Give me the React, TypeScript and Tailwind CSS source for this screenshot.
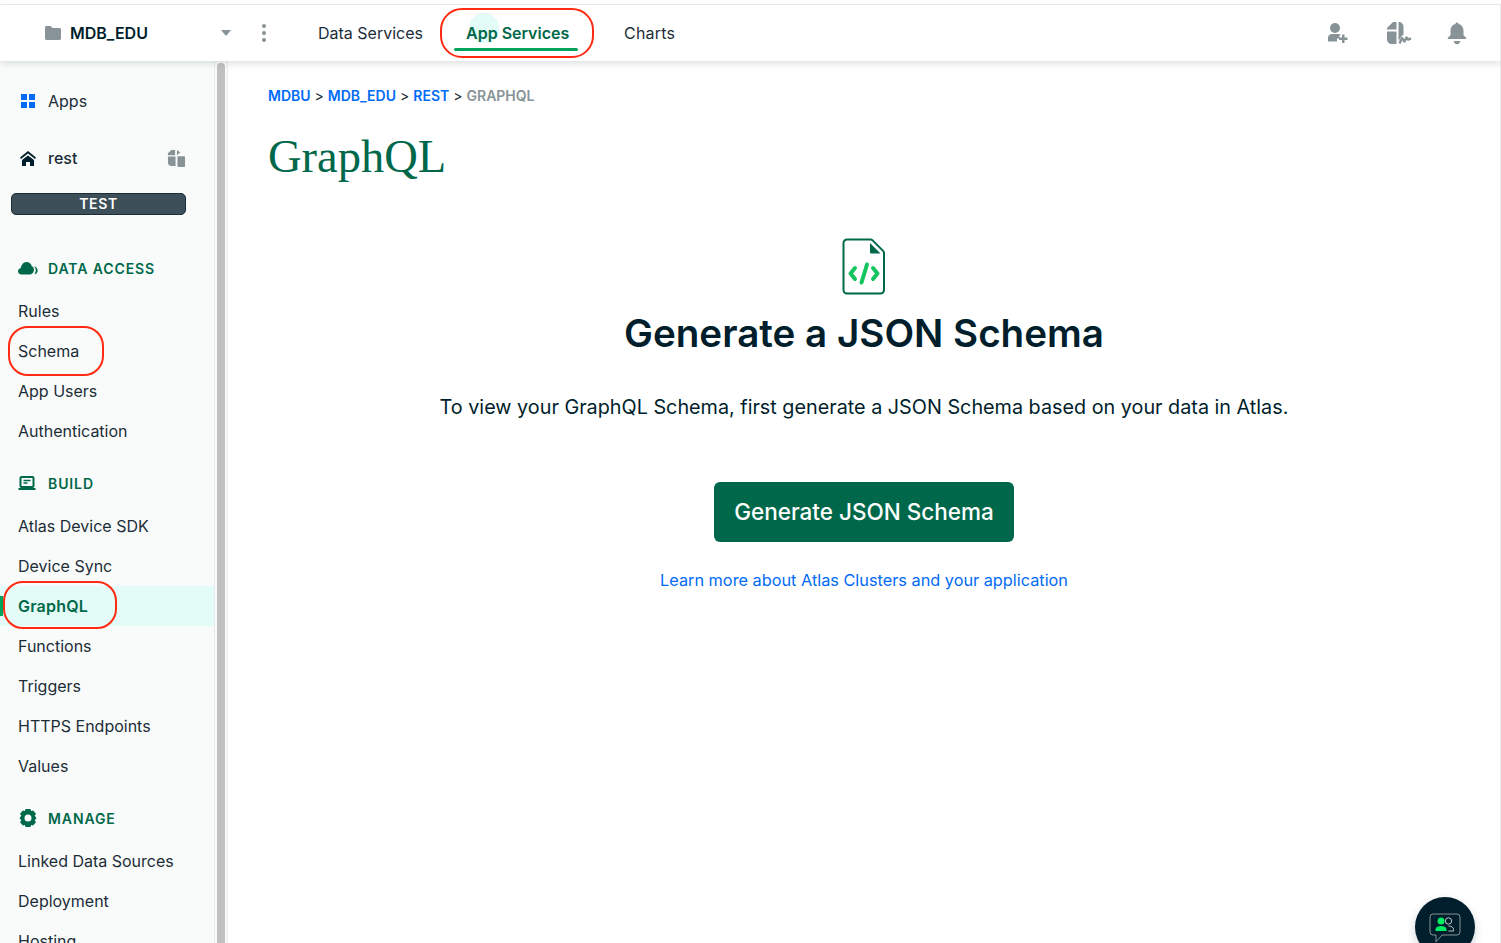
import type { ReactNode } from "react";

const font = "font-['Inter','Liberation_Sans',sans-serif]";

function NavItem({ label, active }: { label: string; active?: boolean }) {
  return (
    <div
      className={
        active
          ? "relative flex h-10 items-center bg-[#e3fcf7] pl-[18px] text-[16px] font-semibold tracking-[0.2px] text-[#00684a]"
          : "flex h-10 items-center pl-[18px] text-[16px] text-[#1c2d38]"
      }
    >
      {active && <span className="absolute left-0 top-[10px] h-5 w-[3px] bg-[#00a35c]" />}
      {label}
    </div>
  );
}

function SectionTitle({ icon, label }: { icon: ReactNode; label: string }) {
  return (
    <div className="mt-[9px] flex h-[46px] items-center pl-[18px] text-[14px] font-semibold tracking-[0.9px] text-[#00684a]">
      <span className="flex w-[30px] items-center">{icon}</span>
      {label}
    </div>
  );
}

function RedRing({ className }: { className: string }) {
  return <div className={`absolute border-2 border-[#ff2a12] ${className}`} />;
}

function Folder() {
  return (
    <svg width="18" height="16" viewBox="0 0 18 16" fill="#889397">
      <path d="M1 2.500C1 1.700 1.700 1 2.500 1h4L8.500 3h7c.8 0 1.500.7 1.500 1.500v9c0 .8-.7 1.500-1.500 1.500h-13C1.700 15 1 14.300 1 13.500z" />
    </svg>
  );
}

function CloudIcon() {
  return (
    <svg width="20" height="14" viewBox="0 0 20 14" fill="#00684a">
      <path d="M3.500 13.500C1.500 13.500 0 12 0 10.200c0-1.700 1.200-3 2.800-3.300C3.300 4.500 5 1 8.500 1c2.700 0 4.700 1.800 5.300 4.200 1.500.4 2.200 2 2.200 3.600 0 2.500-1.800 4.700-4 4.700z" />
      <path d="M16.500 5.200c1.800.7 3.200 2.300 3.200 4.300 0 1.500-.8 2.900-2.200 3.600-.5.200-1-.2-.7-.7.6-1 1-2.100 1-3.200 0-1.300-.6-2.500-1.400-3.400-.3-.3 0-.7.100-.6z" />
    </svg>
  );
}

function LaptopIcon() {
  return (
    <svg width="18" height="14" viewBox="0 0 18 14" fill="none">
      <rect x="2.500" y="1" width="13" height="10" rx="1" stroke="#00684a" strokeWidth="2" />
      <path d="M5.500 4.500h7M5.500 7h4" stroke="#00684a" strokeWidth="1.500" />
      <path d="M0.500 12h17v2h-17z" fill="#00684a" />
    </svg>
  );
}

function GearIcon() {
  return (
    <svg width="20" height="20" viewBox="0 0 20 20" fill="#00684a">
      <path
        fillRule="evenodd"
        d="M7.500 1h5l.6 2.100 2-.6 2.900 3.300-1.300 1.900 1.800 2.300-1.800 2.300 1.300 1.900-2.900 3.300-2-.6-.6 2.100h-5l-.6-2.100-2 .6L2 14.200l1.300-1.900L1.500 10l1.800-2.300L2 5.800l2.900-3.300 2 .6zM10 6.500a3.500 3.500 0 1 0 0 7 3.500 3.500 0 0 0 0-7z"
      />
    </svg>
  );
}

function PagesIcon({ fill, size }: { fill: string; size: number }) {
  return (
    <svg width={size} height={size} viewBox="0 0 20 20" fill={fill}>
      <path d="M4.500 1H8.500V6.500H1V4.500z" />
      <path d="M10.500 1 14 3.500 10.500 6.500z" />
      <path d="M1 8H9V18H4.500C2.500 18 1 16.500 1 14.500z" />
      <path d="M12 7.500h6c.6 0 1 .4 1 1V18c0 .6-.4 1-1 1h-6c-.6 0-1-.4-1-1V8.500c0-.6.4-1 1-1z" />
    </svg>
  );
}

function AddUserIcon() {
  return (
    <svg width="22" height="22" viewBox="0 0 22 22" fill="#889397">
      <circle cx="8" cy="6" r="5" />
      <path d="M1 19.500v-3.700C1 13.500 3 12 5 12h6c1.300 0 2.300.5 3 1.300h-1.500v3.200H10V19.500z" />
      <path d="M15 12.500h2.500V15.500H20.500V18H17.500v3H15v-3H12v-2.500h3z" />
    </svg>
  );
}

function ActivityFeedIcon() {
  return (
    <svg width="26" height="24" viewBox="0 0 26 24" fill="#889397">
      <path d="M7 1H10.500V8.500H1V7z" />
      <path d="M12.500 1c3 0 5 2 5 5v8c-1 .2-2 1-2.500 2l-2.500 4z" />
      <path d="M1 10.500H10.500V23H6c-3 0-5-2-5-5z" />
      <path d="M13.500 22.500 16 17l2.500 3.500 2-4 1.500 2 3-1" fill="none" stroke="#889397" strokeWidth="2.400" strokeLinejoin="round" />
    </svg>
  );
}

function BellIcon() {
  return (
    <svg width="20" height="23" viewBox="0 0 20 23" fill="#889397">
      <path d="M10 0.500c.9 0 1.500.6 1.600 1.500 3 .7 4.900 3.300 4.900 6.500v4.800l2.700 2.500v1.200H.8v-1.200l2.700-2.500V8.500c0-3.200 1.900-5.800 4.900-6.500.1-.9.700-1.500 1.600-1.500z" />
      <path d="M6.700 19h6.600c-.3 2-1.700 3.300-3.300 3.300S7 21 6.700 19z" />
    </svg>
  );
}

function CodeFileIcon() {
  return (
    <svg width="44" height="57" viewBox="0 0 44 57" fill="none">
      <path
        d="M5 1.500h23.500a3 3 0 0 1 2.100.9l10.500 10.500a3 3 0 0 1 .9 2.100V52a3.500 3.500 0 0 1-3.500 3.500H5A3.500 3.500 0 0 1 1.500 52V5A3.500 3.500 0 0 1 5 1.500z"
        stroke="#00684a"
        strokeWidth="2"
      />
      <path d="M28 5l10.500 10.500H29a1 1 0 0 1-1-1z" fill="#00684a" />
      <path
        d="M13 30 8.500 35.500 13 41M31 30l4.500 5.500L31 41M25 26.500l-5.500 18"
        stroke="#13c55e"
        strokeWidth="4"
        strokeLinecap="round"
        strokeLinejoin="round"
      />
    </svg>
  );
}

function ChatIcon() {
  return (
    <svg width="32" height="30" viewBox="0 0 32 30" fill="none">
      <path
        d="M4 1h24a3 3 0 0 1 3 3v15a3 3 0 0 1-3 3H13l-6 7v-7H4a3 3 0 0 1-3-3V4a3 3 0 0 1 3-3z"
        stroke="#889397"
        strokeWidth="1"
      />
      <circle cx="12" cy="8" r="3.500" fill="#00ed64" />
      <path d="M6.500 18v-1.500c0-2 2-3.500 5.500-3.500s5.500 1.500 5.500 3.500V18z" fill="#00ed64" />
      <circle cx="19.500" cy="8" r="3.200" stroke="#c1c7c6" strokeWidth="1" />
      <path d="M19.500 13c3 0 5 1.300 5 3.500V18h-5" stroke="#c1c7c6" strokeWidth="1" />
    </svg>
  );
}

export default function App() {
  return (
    <div className={`relative flex h-[943px] flex-col overflow-hidden bg-white ${font}`}>
      <div className="h-[5px] border-b border-[#e8edeb] bg-white" />

      <header className="relative z-10 flex h-[56px] items-center border-r border-[#e8edeb] bg-white pl-[44px] pr-[33px] shadow-[0_3px_6px_rgba(0,30,43,0.12)]">
        <Folder />
        <span className="ml-[8px] w-[151px] text-[16px] font-semibold text-[#001e2b]">MDB_EDU</span>
        <span className="h-0 w-0 border-x-[5px] border-t-[6px] border-x-transparent border-t-[#889397]" />
        <span className="ml-[31px] flex flex-col gap-[3px]">
          <span className="h-[4px] w-[4px] rounded-full bg-[#889397]" />
          <span className="h-[4px] w-[4px] rounded-full bg-[#889397]" />
          <span className="h-[4px] w-[4px] rounded-full bg-[#889397]" />
        </span>
        <span className="ml-[52px] w-[136px] text-[16px] text-[#1c2d38]">Data Services</span>
        <div className="relative flex h-full w-[124px] items-center">
          <span className="absolute left-[15px] top-[8px] h-[30px] w-[30px] rounded-full bg-[#e3fcf7]" />
          <span className="relative pl-[12px] text-[16px] font-semibold text-[#00684a]">App Services</span>
          <span className="absolute bottom-[10px] left-0 right-0 h-[3px] rounded-full bg-[#00a35c]" />
        </div>
        <span className="ml-[46px] text-[16px] tracking-[0.2px] text-[#1c2d38]">Charts</span>
        <div className="ml-auto flex items-center gap-[35px]">
          <span className="-ml-[2px] mr-[2px]">
            <AddUserIcon />
          </span>
          <ActivityFeedIcon />
          <BellIcon />
        </div>
      </header>

      <div className="flex min-h-0 flex-1">
        <aside className="w-[215px] shrink-0 border-r border-[#e8edeb] bg-[#f9fbfa] pt-[20px]">
          <div className="flex h-10 items-center pl-[21px] text-[16px] text-[#1c2d38]">
            <span className="mr-[13px] grid grid-cols-2 gap-[2px]">
              <span className="h-[6px] w-[6px] bg-[#016bf8]" />
              <span className="h-[6px] w-[6px] bg-[#016bf8]" />
              <span className="h-[6px] w-[6px] bg-[#016bf8]" />
              <span className="h-[6px] w-[6px] bg-[#016bf8]" />
            </span>
            Apps
          </div>
          <div className="mt-[17px] flex h-10 items-center pl-[20px] pr-[28px] text-[16px] font-medium text-[#1c2d38]">
            <svg className="mr-[12px]" width="16" height="15" viewBox="0 0 16 15" fill="#001e2b">
              <path d="M8 0 16 6.500 15 8 8 2.500 1 8 0 6.500z" />
              <path d="M8 4.500 14 9v6H10v-4H6v4H2V9z" />
            </svg>
            rest
            <span className="ml-auto">
              <PagesIcon fill="#889397" size={19} />
            </span>
          </div>
          <div className="ml-[11px] mt-[15px] flex h-[22px] w-[175px] items-center justify-center rounded-[5px] border border-[#1c2d38] bg-[#3d4f58] pb-[2px] text-[14px] font-semibold tracking-[0.6px] text-white">
            TEST
          </div>

          <div className="mt-[30px]">
            <SectionTitle icon={<CloudIcon />} label="DATA ACCESS" />
            <NavItem label="Rules" />
            <NavItem label="Schema" />
            <NavItem label="App Users" />
            <NavItem label="Authentication" />
            <SectionTitle icon={<LaptopIcon />} label="BUILD" />
            <NavItem label="Atlas Device SDK" />
            <NavItem label="Device Sync" />
            <NavItem label="GraphQL" active />
            <NavItem label="Functions" />
            <NavItem label="Triggers" />
            <NavItem label="HTTPS Endpoints" />
            <NavItem label="Values" />
            <SectionTitle icon={<GearIcon />} label="MANAGE" />
            <NavItem label="Linked Data Sources" />
            <NavItem label="Deployment" />
            <NavItem label="Hosting" />
          </div>
        </aside>

        <div className="w-[13px] shrink-0 border-r border-[#e8edeb] bg-[#fafafa] pl-[2px] pt-[2px]">
          <div className="h-full w-[8px] rounded-t-full bg-[#c1c1c1]" />
        </div>

        <main className="flex min-w-0 flex-1 flex-col border-r border-[#e8edeb] pl-[40px] pr-[40px] pt-[24px]">
          <div className="flex h-5 items-center gap-[4px] text-[14px] font-semibold text-[#016bf8]">
            <span>MDBU</span>
            <span className="font-normal text-[#1c2d38]">&gt;</span>
            <span>MDB_EDU</span>
            <span className="font-normal text-[#1c2d38]">&gt;</span>
            <span>REST</span>
            <span className="font-normal text-[#1c2d38]">&gt;</span>
            <span className="text-[#889397]">GRAPHQL</span>
          </div>
          <h1 className="mt-[24px] font-['Liberation_Serif',serif] text-[46.500px] leading-[56px] text-[#00684a]">GraphQL</h1>

          <div className="mt-[53px] flex flex-col items-center">
            <CodeFileIcon />
            <h2 className="mt-[12px] text-[38.600px] font-semibold leading-[52px] text-[#001e2b]">Generate a JSON Schema</h2>
            <p className="mt-[33px] text-[19.800px] leading-[30px] text-[#001e2b]">
              To view your GraphQL Schema, first generate a JSON Schema based on your data in Atlas.
            </p>
            <button className="mt-[60px] flex h-[60px] w-[300px] items-center justify-center rounded-[6px] bg-[#00684a] text-[22.500px] font-medium text-white">
              Generate JSON Schema
            </button>
            <a className="mt-[26px] text-[16.300px] leading-[24px] text-[#016bf8]">Learn more about Atlas Clusters and your application</a>
          </div>
        </main>
      </div>

      <RedRing className="z-20 left-[440px] top-[8px] h-[50px] w-[154px] rounded-[22px]" />
      <RedRing className="z-20 left-[8px] top-[326px] h-[50px] w-[96px] rounded-[20px]" />
      <RedRing className="z-20 left-[3px] top-[581px] h-[48px] w-[114px] rounded-[20px]" />

      <div className="absolute left-[1415px] top-[897px] z-20 flex h-[60px] w-[60px] justify-center rounded-full bg-[#001e2b] pt-[16px] shadow-[0_4px_10px_rgba(0,30,43,0.2)]">
        <ChatIcon />
      </div>
    </div>
  );
}
